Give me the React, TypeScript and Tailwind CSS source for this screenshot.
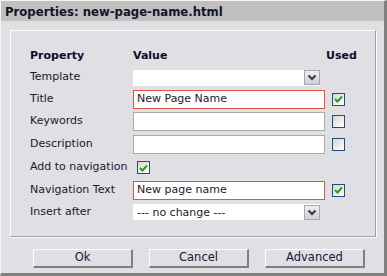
import React from 'react';

const FONT = "font-['DejaVu_Sans',Verdana,sans-serif]";

function Chevron() {
  return (
    <svg width="10" height="7" viewBox="0 0 10 7">
      <polyline points="1.5,1.5 5,5 8.5,1.5" fill="none" stroke="#3a3a3a" strokeWidth="2.2" />
    </svg>
  );
}

function Select({ text }: { text?: string }) {
  return (
    <div className="w-[187px] h-[16px] bg-white flex items-center justify-between">
      <span className="pl-[4px] text-[11px] text-[#1a1a2a] leading-none">{text}</span>
      <div className="w-[16px] h-[15px] border border-[#a8a8b2] bg-gradient-to-b from-[#eeeef3] to-[#cfcfd8] flex items-center justify-center">
        <Chevron />
      </div>
    </div>
  );
}

function Input({ value, error }: { value?: string; error?: boolean }) {
  return (
    <div
      className={`w-[192px] h-[19px] bg-white border flex items-center pl-[3px] text-[11px] text-[#1a1a2a] ${
        error ? 'border-[#e4533f]' : 'border-[#a9a9ae]'
      }`}
    >
      {value}
    </div>
  );
}

function Check({ checked }: { checked?: boolean }) {
  return (
    <div className="w-[13px] h-[13px] border border-[#1d4f7f] bg-gradient-to-br from-[#d6d6d0] to-[#ffffff] flex items-center justify-center">
      {checked && (
        <svg width="9" height="8" viewBox="0 0 9 8">
          <polyline points="1,4 3.5,6.5 8,1.5" fill="none" stroke="#21a121" strokeWidth="2" />
        </svg>
      )}
    </div>
  );
}

function Row({ label, h, children, used }: { label: string; h: string; children?: React.ReactNode; used?: React.ReactNode }) {
  return (
    <div className={`flex items-center ${h}`}>
      <div className="w-[103px] text-[11px] text-[#1f1530]">{label}</div>
      <div className="w-[193px] flex items-center">{children}</div>
      <div className="pl-[6px]">{used}</div>
    </div>
  );
}

function Button({ label, ml }: { label: string; ml: string }) {
  return (
    <div
      className={`${ml} w-[100px] h-[19px] border-t border-l border-t-white border-l-white border-b-2 border-r-2 border-b-[#808080] border-r-[#808080] flex items-center justify-center text-[11.5px] text-[#16163a]`}
    >
      {label}
    </div>
  );
}

export default function App() {
  return (
    <div
      className={`${FONT} w-[387px] h-[276px] flex flex-col bg-[#e0dfe3] border-t border-l border-t-[#f6f5ee] border-l-[#f4f4f4] border-r-[3px] border-b-[3px] border-r-[#808080] border-b-[#808080]`}
    >
      <div className="h-[20px] bg-[#c0c0c0] pl-[4px] pt-[3px] flex items-center text-[11.7px] font-bold text-[#141428]">
        Properties: new-page-name.html
      </div>

      <div className="ml-[9px] mt-[9px] w-[366px] h-[207px] border border-t-white border-l-white border-r-[#9d9da1] border-b-[#9d9da1] shadow-[1px_1px_0_#ffffff] pt-[15px] pl-[19px]">
        <div className="flex items-center h-[21px] text-[11px] font-bold text-[#0e0e2a]">
          <div className="w-[103px]">Property</div>
          <div className="w-[193px]">Value</div>
          <div>Used</div>
        </div>
        <Row label="Template" h="h-[21px]">
          <Select />
        </Row>
        <Row label="Title" h="h-[22px]" used={<Check checked />}>
          <Input value="New Page Name" error />
        </Row>
        <Row label="Keywords" h="h-[23px]" used={<Check />}>
          <Input />
        </Row>
        <Row label="Description" h="h-[23px]" used={<Check />}>
          <Input />
        </Row>
        <Row label="Add to navigation" h="h-[23px]">
          <div className="pl-[4px]">
            <Check checked />
          </div>
        </Row>
        <Row label="Navigation Text" h="h-[22px]" used={<Check checked />}>
          <Input value="New page name" error />
        </Row>
        <Row label="Insert after" h="h-[22px]">
          <Select text="--- no change ---" />
        </Row>
      </div>

      <div className="flex mt-[12px]">
        <Button label="Ok" ml="ml-[32px]" />
        <Button label="Cancel" ml="ml-[16px]" />
        <Button label="Advanced" ml="ml-[16px]" />
      </div>
    </div>
  );
}
